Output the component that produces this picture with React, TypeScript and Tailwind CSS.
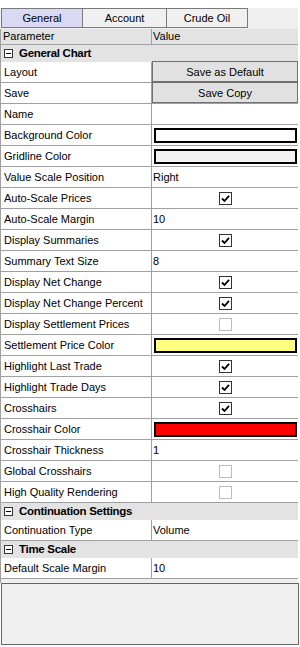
import React from "react";

type Row =
  | { kind: "cat"; label: string }
  | { kind: "text"; label: string; value?: string }
  | { kind: "btn"; label: string; value: string }
  | { kind: "color"; label: string; color: string }
  | { kind: "check"; label: string; checked: boolean };

const rows: Row[] = [
  { kind: "cat", label: "General Chart" },
  { kind: "btn", label: "Layout", value: "Save as Default" },
  { kind: "btn", label: "Save", value: "Save Copy" },
  { kind: "text", label: "Name", value: "" },
  { kind: "color", label: "Background Color", color: "#ffffff" },
  { kind: "color", label: "Gridline Color", color: "#f2f2f2" },
  { kind: "text", label: "Value Scale Position", value: "Right" },
  { kind: "check", label: "Auto-Scale Prices", checked: true },
  { kind: "text", label: "Auto-Scale Margin", value: "10" },
  { kind: "check", label: "Display Summaries", checked: true },
  { kind: "text", label: "Summary Text Size", value: "8" },
  { kind: "check", label: "Display Net Change", checked: true },
  { kind: "check", label: "Display Net Change Percent", checked: true },
  { kind: "check", label: "Display Settlement Prices", checked: false },
  { kind: "color", label: "Settlement Price Color", color: "#ffff80" },
  { kind: "check", label: "Highlight Last Trade", checked: true },
  { kind: "check", label: "Highlight Trade Days", checked: true },
  { kind: "check", label: "Crosshairs", checked: true },
  { kind: "color", label: "Crosshair Color", color: "#ff0000" },
  { kind: "text", label: "Crosshair Thickness", value: "1" },
  { kind: "check", label: "Global Crosshairs", checked: false },
  { kind: "check", label: "High Quality Rendering", checked: false },
  { kind: "cat", label: "Continuation Settings" },
  { kind: "text", label: "Continuation Type", value: "Volume" },
  { kind: "cat", label: "Time Scale" },
  { kind: "text", label: "Default Scale Margin", value: "10" },
];

function CheckBox({ checked }: { checked: boolean }) {
  return (
    <div
      className={
        checked
          ? "w-[13px] h-[13px] border border-[#333333] bg-white flex items-center justify-center"
          : "w-[13px] h-[13px] border border-[#bcbcbc] bg-white"
      }
    >
      {checked && (
        <svg width="9" height="9" viewBox="0 0 9 9">
          <path d="M1 4.5 L3.5 7 L8 1.8" fill="none" stroke="#000" strokeWidth="1.8" />
        </svg>
      )}
    </div>
  );
}

function Minus() {
  return (
    <div className="w-[9px] h-[9px] border border-[#333333] bg-white flex items-center justify-center shrink-0">
      <div className="w-[5px] h-px bg-black" />
    </div>
  );
}

function RowView({ r }: { r: Row }) {
  if (r.kind === "cat") {
    return (
      <div className="h-[17px] bg-[#e3e3e3] flex items-center pl-[3px] gap-[6px] border-b border-[#e3e3e3]">
        <Minus />
        <span className="font-bold text-[11.5px] tracking-[-0.3px] leading-none pt-px">{r.label}</span>
      </div>
    );
  }
  let right: React.ReactNode = null;
  if (r.kind === "text") {
    right = <span className="pl-[1px] pt-px">{r.value}</span>;
  } else if (r.kind === "btn") {
    right = (
      <div className="w-[146px] h-[21px] -mt-px border border-[#707070] bg-[#e1e1e1] flex items-center justify-center pt-px">
        {r.value}
      </div>
    );
  } else if (r.kind === "color") {
    right = (
      <div className="w-full h-[21px] flex items-center pr-[1px] pl-[2px]">
        <div className="flex-1 h-[15px] border-2 border-black" style={{ backgroundColor: r.color }} />
      </div>
    );
  } else if (r.kind === "check") {
    right = (
      <div className="w-full flex justify-center">
        <CheckBox checked={r.checked} />
      </div>
    );
  }
  return (
    <div className="h-[21px] flex border-b border-[#a0a0a0] bg-white">
      <div className="w-[151px] border-r border-[#a0a0a0] flex items-center pl-[3px] pt-px whitespace-nowrap overflow-hidden">
        {r.label}
      </div>
      <div className="flex-1 flex items-center">{right}</div>
    </div>
  );
}

export default function App() {
  return (
    <div
      className="w-[300px] h-[647px] bg-white text-[11px] text-black relative"
      style={{ fontFamily: '"Liberation Sans", Arial, sans-serif' }}
    >
      <div className="h-[8px]" />
      <div className="w-[298px] h-[21px] bg-[#f0f0f0] flex pl-[1px]">
        <div className="w-[82px] h-[20px] border border-[#7a7a7a] bg-[#d9d9f4] flex items-center justify-center pt-px">
          General
        </div>
        <div className="w-[84px] h-[20px] border border-l-0 border-[#7a7a7a] bg-[#f0f0f0] flex items-center justify-center pt-px">
          Account
        </div>
        <div className="w-[81px] h-[20px] border border-l-0 border-[#7a7a7a] bg-[#f0f0f0] flex items-center justify-center pt-px">
          Crude Oil
        </div>
      </div>
      <div className="w-[298px] border-l border-[#a0a0a0]">
        <div className="h-[16px] flex bg-[#e3e3e3] border-b border-[#a0a0a0]">
          <div className="w-[151px] border-r border-[#a0a0a0] flex items-center pl-[2px]">Parameter</div>
          <div className="flex-1 flex items-center pl-[1px]">Value</div>
        </div>
        {rows.map((r, i) => (
          <RowView key={i} r={r} />
        ))}
        <div className="h-[4px] bg-[#f0f0f0]" />
      </div>
      <div className="ml-px w-[298px] h-[62px] border border-[#646464] bg-[#f0f0f0]" />
    </div>
  );
}
